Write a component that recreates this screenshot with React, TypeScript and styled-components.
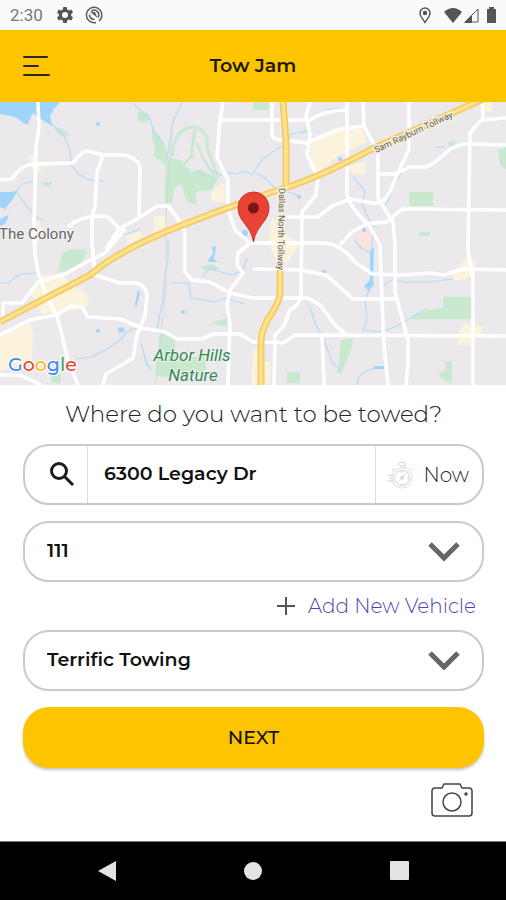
import React from "react";
import styled, { createGlobalStyle } from "styled-components";

const GlobalStyle = createGlobalStyle`
  *, *::before, *::after { box-sizing: border-box; }
  body { margin: 0; background: #fff; }
  button, input, select { font: inherit; color: inherit; }
`;

const yellow = "#ffc400";
const outline = "#c8c8d6";

const Page = styled.div`
  min-height: 100vh;
  display: flex;
  flex-direction: column;
  background: #fff;
  color: #111;
  font-family: Montserrat, Inter, "Open Sans", sans-serif;
`;

const StatusBar = styled.div`
  height: 30px;
  padding: 0 8px 0 10px;
  display: flex;
  align-items: center;
  justify-content: space-between;
  background: #fafafa;
  color: #777;
  font: 17px/30px Roboto, sans-serif;
`;

const StatusGroup = styled.div<{ $gap: number }>`
  display: flex;
  align-items: center;
  gap: ${(p) => p.$gap}px;
  svg { display: block; }
`;

const Clock = styled.time`
  margin-right: 2px;
`;

const Header = styled.header`
  height: 72px;
  padding: 0 20px;
  display: grid;
  grid-template-columns: 34px 1fr 34px;
  align-items: center;
  background: ${yellow};
`;

const Title = styled.h1`
  margin: 0;
  text-align: center;
  font-size: 19px;
  line-height: 24px;
  font-weight: 600;
  color: #1c1803;
`;

const IconButton = styled.button`
  display: flex;
  padding: 3px;
  border: 0;
  background: none;
  cursor: pointer;
`;

const MapArea = styled.section`
  flex: 1 1 283px;
  min-height: 200px;
  display: grid;
  overflow: hidden;
  background: #ebe9ec;
`;

const MapSvg = styled.svg`
  width: 100%;
  height: 100%;
  min-height: 0;
  display: block;
`;

const Form = styled.form`
  padding: 13px 22px 20px 23px;
  display: flex;
  flex-direction: column;
`;

const Question = styled.h2`
  margin: 0 0 14px;
  text-align: center;
  font-size: 23px;
  line-height: 32px;
  font-weight: 300;
  color: #222;
`;

const SearchField = styled.div`
  height: 61px;
  display: flex;
  border: 2px solid ${outline};
  border-radius: 26px;
`;

const SearchLabel = styled.label`
  width: 63px;
  padding: 0 11px 0 0;
  display: flex;
  align-items: center;
  justify-content: flex-end;
  border-right: 1px solid #dadae4;
`;

const SearchInput = styled.input`
  flex: 1;
  min-width: 0;
  padding: 0 16px 2px;
  border: 0;
  background: none;
  font-size: 19px;
  font-weight: 600;
  outline: none;
`;

const WhenButton = styled.button`
  width: 107px;
  padding: 0 13px 0 11px;
  display: flex;
  align-items: center;
  justify-content: space-between;
  border: 0;
  border-left: 1px solid #dadae4;
  background: none;
  font-size: 20px;
  font-weight: 300;
  color: #222;
  cursor: pointer;
`;

const SelectField = styled.label`
  height: 61px;
  display: grid;
  align-items: stretch;
  border: 2px solid ${outline};
  border-radius: 26px;
  & > * { grid-area: 1 / 1; }
  svg {
    align-self: center;
    justify-self: end;
    margin-right: 22px;
    pointer-events: none;
  }
`;

const Select = styled.select`
  width: 100%;
  padding: 0 60px 2px 22px;
  border: 0;
  border-radius: 24px;
  appearance: none;
  background: none;
  font-size: 19px;
  font-weight: 600;
  outline: none;
`;

const VehicleBlock = styled.div`
  margin-top: 16px;
`;

const AddRow = styled.div`
  height: 48px;
  padding-right: 8px;
  display: flex;
  align-items: center;
  justify-content: flex-end;
`;

const AddLink = styled.a`
  display: flex;
  align-items: center;
  gap: 12px;
  font-size: 20px;
  line-height: 24px;
  font-weight: 300;
  color: #5443b4;
  text-decoration: none;
`;

const NextButton = styled.button`
  height: 61px;
  margin-top: 16px;
  border: 0;
  border-radius: 26px;
  background: ${yellow};
  box-shadow: 0 2px 3px rgba(0, 0, 0, 0.24);
  font-size: 19px;
  font-weight: 500;
  cursor: pointer;
`;

const CameraRow = styled.div`
  margin-top: 11px;
  padding-right: 7px;
  display: flex;
  justify-content: flex-end;
`;

const NavBar = styled.nav`
  height: 59px;
  display: grid;
  grid-template-columns: 1fr 120px 1fr;
  align-items: center;
  justify-items: center;
  padding: 0 20px;
  border-top: 1px solid #777;
  background: #000;
`;

const waterAreas = [
  "M0 102H60L54 109L50 116L52 126L44 121L39 118L33 113L27 125L15 117L0 114Z",
  "M0 192L12 192L18 190L13 199L5 209L0 207Z",
  "M0 219L9 215L5 224L0 226Z",
  "M209 259L213 253L212 246L216 247L214 259L218 262L208 262Z",
  "M370 250L374 248L373 280L374 284L369 291L364 286L370 280Z",
  "M135 304L138 290L140 293L136 308Z",
  "M118 328L123 327L125 332L119 333Z",
];

const streams = [
  "M51 123L58 130L65 138L70 150L71 164L78 174L90 180L104 181",
  "M0 202L18 190L22 184L34 181M16 192L28 208L37 217L44 221",
  "M134 104L143 113L150 118L154 133L164 145",
  "M182 102L172 125L167 160",
  "M224 172L238 174L245 171L253 175",
  "M168 240L168 260L165 275L163 300L157 328",
  "M0 283L8 283L20 274L37 273",
  "M75 359L92 357L107 349L120 340L128 331L139 327L160 333",
  "M141 343L147 364L152 369",
  "M118 236L130 233L140 229",
  "M170 283L189 283L191 298L215 302L225 298L244 304",
  "M203 276L210 268L221 272L233 275L243 270L247 258",
  "M253 172L263 159L277 149L286 144L291 134L304 132",
  "M253 172L264 177L274 187L295 194L301 197",
  "M353 177L365 191L362 205L368 217L373 225L372 249",
  "M370 287L365 301L367 320L363 330L383 332L399 325L407 320L426 309",
  "M412 145L404 160L402 172L394 184L388 201L384 207",
  "M309 305L316 325L324 340L332 362L340 370",
  "M357 385L359 376L368 370L385 367L384 361",
  "M383 286L393 279L404 282L428 282L453 279",
  "M436 147L445 147M326 110L340 108M354 240L362 249L371 253",
  "M205 160L211 170L222 176M195 172L209 176L215 181",
];

const parks = [
  "M137 112L148 113L150 119L146 123L138 122Z",
  "M54 127L61 128L69 134L65 137L56 132Z",
  "M42 182L52 182L51 187L43 186Z",
  "M152 127L159 135L164 145L169 158L181 160L191 172L200 169L218 179L212 190L198 191L195 194L197 205L187 202L181 185L175 187L172 202L165 203V174L166 165L153 156L155 146L152 139Z",
  "M62 254L69 249L86 250L85 256L80 265L68 272L58 271Z",
  "M160 332L175 340V352L180 357H205L206 375L175 378L155 376Z",
  "M201 267L211 264L219 268L216 271L205 270Z",
  "M142 350L149 369L153 371L146 366Z",
  "M214 322L227 318V326L216 325Z",
  "M52 374L61 375V383H51Z",
  "M409 192H433V206H409Z",
  "M498 150L506 147V170L500 164Z",
  "M412 315L433 309L443 308V297H472V319H412Z",
  "M341 340L352 338L353 344L342 373L337 374L339 362Z",
  "M287 372H300V383H287Z",
  "M438 374L446 370L445 362L452 361V384L444 380Z",
  "M419 232H430V236H419Z",
  "M253 102H269V110H253Z",
  "M300 132L306 129L309 134Z M448 142L455 141V147H449Z",
];

const districts = [
  "M310 142L340 129L363 129L366 142L336 157L317 174L309 168Z",
  "M350 166L366 161V174H352Z",
  "M28 155H34V163H41V171H33Z",
  "M215 188L225 183V202H211V193Z",
  "M154 216H165V230L154 234Z",
  "M30 292L42 275L62 274L75 288L85 292L90 304L80 309L60 312L42 314Z",
  "M0 335L30 323L34 333L31 361L0 371Z",
  "M125 236L140 231L144 236L128 245Z",
  "M34 223L40 222L42 232L36 247L31 242Z",
  "M466 258L475 260V274L464 280H454L453 273Z",
  "M464 323L482 326V335H472V345H458V334Z",
  "M272 216L280 230L300 244L288 262L277 262L268 242Z",
  "M483 102H492V111H484Z",
  "M253 350L260 348V385H251Z M262 362H270V383H262Z",
];

const streets = [
  "M38 102L39 127L36 148L34 225L35 254L38 272L46 295L57 316L62 335L68 360L78 385",
  "M0 180L12 179Q20 166 33 164L73 163Q82 150 88 151L103 155H125Q140 160 140 168L139 216",
  "M103 155L97 172L95 205L92 218V242L95 275L120 283L136 283Q147 286 147 297L145 315L137 335L133 358L106 374L103 385",
  "M68 227Q84 213 108 217L119 228",
  "M106 249L119 229L140 217L157 206H168L177 217L185 232L185 272L192 280L210 282L230 293L253 298H308L320 305L335 325L345 334",
  "M223 102L220 120L217 157L228 180V210L235 230L250 243L238 253L237 265L243 273L230 290L227 305L230 325L228 385",
  "M220 120H310Q325 110 347 110",
  "M125 229L105 253L81 265L65 274L38 282L22 303H3V318",
  "M0 335L30 320L56 315L72 306L82 307L88 317L120 319L142 328L165 332L178 339H202L213 334L240 334L253 342L283 343L295 335L506 336",
  "M0 375H20L41 385",
  "M272 102V134Q273 140 282 140L306 143L325 135L340 129L364 126",
  "M310 102L306 116L310 135L307 155L318 177L316 195L302 212L301 295Q300 305 290 310L284 326L275 335L274 385",
  "M363 102L364 126L378 152V198L393 222L395 245V292L408 340V365L406 385",
  "M347 102L347 195Q350 207 370 227L380 245L382 300L384 345L388 385",
  "M409 102V149L393 184Q386 208 367 202L350 199L332 206L318 217H284",
  "M378 174H394L410 167H426Q435 164 450 149Q458 144 470 144L506 145",
  "M482 102L483 118L470 133L468 250L473 280V385",
  "M483 120L506 118",
  "M340 245L352 232L366 224L387 222L402 209L506 210",
  "M250 243L325 243Q342 245 355 262L372 274L400 275L430 273L444 275L463 269L506 270",
  "M253 269L300 270L326 275L341 288L353 299L395 299",
  "M322 335L324 385",
];

const tollways = [
  "M483 99L370 150Q320 177 285 188T185 224T90 275L0 322",
  "M283 102L286 140V190M280 270V293Q280 300 272 313Q261 328 261 342V385",
];

function TownMap() {
  return (
    <MapSvg viewBox="0 102 506 283" preserveAspectRatio="xMidYMid slice" role="img" aria-label="Map">
      <rect y="102" width="506" height="283" fill="#ebe9ec" />
      <g fill="#fcf3dc">{districts.map((d) => <path key={d} d={d} />)}</g>
      <path d="M357 232L369 228L373 244L370 253L356 242Z" fill="#fbe4df" />
      <g fill="#c8e9cd">{parks.map((d) => <path key={d} d={d} />)}</g>
      <path
        d="M172 157Q174 126 195 127Q209 132 207 147L218 178M195 129Q191 153 192 156L183 165"
        fill="none" stroke="#c8e9cd" strokeWidth="3"
      />
      <path d="M196 142L204 160L216 180" fill="none" stroke="#c8e9cd" strokeWidth="2" />
      <g fill="none" stroke="#b4dcf8" strokeWidth="1.2" strokeLinejoin="round">
        {streams.map((d) => <path key={d} d={d} />)}
      </g>
      <g fill="#9fd4fb">
        {waterAreas.map((d) => <path key={d} d={d} />)}
        <circle cx="98" cy="124" r="2" /><circle cx="98" cy="331" r="2" />
        <circle cx="183" cy="312" r="2" /><circle cx="340" cy="159" r="2" />
        <circle cx="245" cy="233" r="3" /><circle cx="324" cy="272" r="2" />
        <circle cx="299" cy="197" r="2" /><circle cx="364" cy="230" r="2" />
        <rect x="374" y="366" width="10" height="3" />
      </g>
      <path d="M173 117L166 210L166 290L155 385" fill="none" stroke="#d8d8dc" />
      <g fill="none" stroke="#fff" strokeWidth="3.6" strokeLinejoin="round">
        {streets.map((d) => <path key={d} d={d} />)}
      </g>
      <g fill="none" stroke="#f4cc65" strokeWidth="7">{tollways.map((d) => <path key={d} d={d} />)}</g>
      <g fill="none" stroke="#ffe391" strokeWidth="3">{tollways.map((d) => <path key={d} d={d} />)}</g>
      <g fontFamily="Roboto, sans-serif" strokeLinejoin="round" paintOrder="stroke">
        <g fill="#68604e" stroke="#f7f1df" strokeWidth="3" fontSize="9">
          <text transform="translate(376 153) rotate(-25)">Sam Rayburn Tollway</text>
          <text transform="translate(279 188) rotate(91)">Dallas North Tollway</text>
        </g>
        <text x="-1" y="239" fontSize="15" fill="#666" stroke="#f5f4f5" strokeWidth="2">The Colony</text>
        <g fill="#39865a" stroke="#edf4ee" strokeWidth="2" fontSize="17" fontStyle="italic" textAnchor="middle">
          <text x="192" y="361">Arbor Hills</text>
          <text x="193" y="381">Nature</text>
        </g>
      </g>
      <text x="8" y="371" fontFamily="Montserrat, Lato, sans-serif" fontSize="19" fontWeight="500" stroke="#fff" strokeWidth="2" paintOrder="stroke">
        <tspan fill="#4285f4">G</tspan><tspan fill="#ea4335">o</tspan><tspan fill="#fbbc05">o</tspan><tspan fill="#4285f4">g</tspan><tspan fill="#34a853">l</tspan><tspan fill="#ea4335">e</tspan>
      </text>
      <path d="M253.500 242C251 225 238 222 238 207.500A15.500 15.500 0 0 1 269 207.500C269 222 256 225 253.500 242Z" fill="#ea4335" stroke="#c5352b" />
      <circle cx="253.500" cy="208" r="5.500" fill="#7b1712" />
    </MapSvg>
  );
}

function Chevron() {
  return (
    <svg width="32" height="20" viewBox="0 0 32 20" aria-hidden="true">
      <path d="M2 2L16 16L30 2" fill="none" stroke="#666" strokeWidth="5" />
    </svg>
  );
}

function Stopwatch() {
  return (
    <svg width="26" height="28" viewBox="0 0 26 28" fill="none" stroke="#d2d2d2" aria-hidden="true">
      <circle cx="15" cy="17" r="10" strokeDasharray="3 1" />
      <circle cx="15" cy="17" r="7.500" />
      <path d="M12 5V2Q15 0 18 2V5M13 5H17V7M22 7L25 10M8 7L5 10M0 14H6M2 17H6M0 20H6M14 18L18 13M15 10V12M15 22V24M20 17H22" />
      <circle cx="15" cy="17" r="1.500" />
    </svg>
  );
}

export default function App() {
  return (
    <Page>
      <GlobalStyle />
      <StatusBar>
        <StatusGroup $gap={12}>
          <Clock>2:30</Clock>
          <svg width="16" height="16" viewBox="0 0 16 16" aria-hidden="true">
            <path d="M6.300 0H9.700L10.200 2.400L12 3.400L14.300 2.600L16 5.500L14.200 7.100V8.900L16 10.500L14.300 13.400L12 12.600L10.200 13.600L9.700 16H6.300L5.800 13.600L4 12.600L1.700 13.400L0 10.500L1.800 8.900V7.100L0 5.500L1.700 2.600L4 3.400L5.800 2.400ZM8 5A3 3 0 1 0 8 11A3 3 0 1 0 8 5Z" fill="#555" fillRule="evenodd" />
          </svg>
          <svg width="18" height="18" viewBox="0 0 18 18" fill="none" stroke="#5c5c5c" aria-hidden="true">
            <path d="M11 16.500A7.700 7.700 0 1 1 14 15" strokeWidth="1.500" />
            <path d="M4.500 8.500A4.700 4.700 0 0 0 9.500 13.500M6.500 5A4.700 4.700 0 0 1 13 11.500" strokeWidth="1.500" />
            <path d="M5 5.500L10 6L12.500 12L9.500 9.500Z" fill="#5c5c5c" stroke="none" />
          </svg>
        </StatusGroup>
        <StatusGroup $gap={2}>
          <svg width="23" height="17" viewBox="0 0 23 17" fill="none" stroke="#555" strokeWidth="1.400" aria-hidden="true">
            <path d="M6 15.500C4 12 1 9.500 1 6A5 5 0 0 1 11 6C11 9.500 8 12 6 15.500Z" />
            <circle cx="6" cy="6" r="1.500" fill="#555" />
          </svg>
          <svg width="18" height="15" viewBox="0 0 18 15" aria-hidden="true">
            <path d="M0 4Q9 -4 18 4L9 15Z" fill="#555" />
          </svg>
          <svg width="16" height="15" viewBox="0 0 16 15" aria-hidden="true">
            <path d="M1 14H14V1Z" fill="none" stroke="#555" />
            <path d="M0 15H8V7Z" fill="#555" />
          </svg>
          <svg width="16" height="16" viewBox="0 0 16 16" aria-hidden="true">
            <path d="M5 2H7V0H12V2H14V16H5Z" fill="#555" />
          </svg>
        </StatusGroup>
      </StatusBar>

      <Header>
        <IconButton type="button" aria-label="Open menu">
          <svg width="28" height="22" viewBox="0 0 28 22" fill="none" stroke="#292832" strokeWidth="2" strokeLinecap="round">
            <path d="M1 2H24M1 11H15M1 20H26" />
          </svg>
        </IconButton>
        <Title>Tow Jam</Title>
      </Header>

      <MapArea><TownMap /></MapArea>

      <Form onSubmit={(e) => e.preventDefault()}>
        <Question>Where do you want to be towed?</Question>
        <SearchField>
          <SearchLabel htmlFor="address" aria-label="Address">
            <svg width="26" height="26" viewBox="0 0 26 26" fill="none" stroke="#1c1c1c" strokeWidth="3" aria-hidden="true">
              <circle cx="9" cy="9" r="7.500" />
              <path d="M14.500 14.500L23 23" />
            </svg>
          </SearchLabel>
          <SearchInput id="address" type="text" defaultValue="6300 Legacy Dr" />
          <WhenButton type="button"><Stopwatch />Now</WhenButton>
        </SearchField>

        <VehicleBlock>
          <SelectField>
            <Select aria-label="Vehicle" defaultValue="111"><option>111</option></Select>
            <Chevron />
          </SelectField>
          <AddRow>
            <AddLink href="#add-vehicle">
              <svg width="20" height="20" viewBox="0 0 20 20" fill="none" stroke="#555" strokeWidth="2" aria-hidden="true">
                <path d="M10 1V19M1 10H19" />
              </svg>
              Add New Vehicle
            </AddLink>
          </AddRow>
          <SelectField>
            <Select aria-label="Towing company" defaultValue="Terrific Towing"><option>Terrific Towing</option></Select>
            <Chevron />
          </SelectField>
        </VehicleBlock>

        <NextButton type="submit">NEXT</NextButton>
        <CameraRow>
          <IconButton type="button" aria-label="Take a photo">
            <svg width="44" height="36" viewBox="0 0 44 36" fill="none" stroke="#444" strokeWidth="1.500">
              <path d="M5 6H12L14 2H30L32 6H39Q42 6 42 9V31Q42 34 39 34H5Q2 34 2 31V9Q2 6 5 6Z" />
              <circle cx="22" cy="20" r="9" />
              <circle cx="36" cy="12" r="1" fill="#444" />
            </svg>
          </IconButton>
        </CameraRow>
      </Form>

      <NavBar aria-label="System navigation">
        <IconButton type="button" aria-label="Back">
          <svg width="20" height="22" viewBox="0 0 20 22"><path d="M1 11L19 1V21Z" fill="#e3e3e3" /></svg>
        </IconButton>
        <IconButton type="button" aria-label="Home">
          <svg width="20" height="20" viewBox="0 0 20 20"><circle cx="10" cy="10" r="9" fill="#e3e3e3" /></svg>
        </IconButton>
        <IconButton type="button" aria-label="Recent apps">
          <svg width="20" height="20" viewBox="0 0 20 20"><rect width="19" height="19" rx="1" fill="#e3e3e3" /></svg>
        </IconButton>
      </NavBar>
    </Page>
  );
}
